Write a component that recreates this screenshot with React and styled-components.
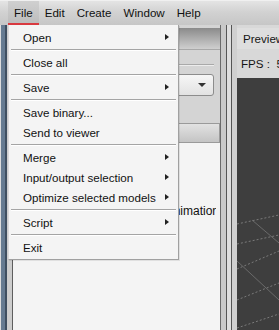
import React from 'react';
import styled, { createGlobalStyle } from 'styled-components';

const GlobalStyle = createGlobalStyle`
  html, body {
    margin: 0;
    padding: 0;
    background: #d4d4d4;
  }
  body {
    font-family: "Liberation Sans", Arial, sans-serif;
    font-size: 11.6px;
    color: #000;
  }
`;

const Window = styled.div`
  position: relative;
  width: 279px;
  height: 330px;
  overflow: hidden;
  display: flex;
  flex-direction: column;
  background: #d4d4d4;
`;

const MenuBar = styled.div`
  display: flex;
  height: 25px;
  padding-left: 8px;
  background: linear-gradient(#e4e4e4, #d2d2d2 45%, #c6c6c6);
  border-top: 1px solid #f0f0f0;
  box-sizing: border-box;
`;

const MenuTitle = styled.div`
  height: 100%;
  padding: 1px 6px 0;
  display: flex;
  align-items: center;
  box-sizing: border-box;
  color: #111;
  background: ${({ $open }) => ($open ? 'linear-gradient(#d0d0d0, #bdbdbd)' : 'transparent')};
  border-bottom: 2px solid ${({ $open }) => ($open ? '#d9393f' : 'transparent')};
`;

const Body = styled.div`
  flex: 1;
  display: flex;
  min-height: 0;
`;

const SideStrip = styled.div`
  width: 13px;
  flex: none;
  background: linear-gradient(
    90deg,
    #dcdcdc 0 1px,
    #667b91 1px 5px,
    #3f4f60 5px 7px,
    #cdcdcd 7px 12px,
    #5e5e5e 12px 13px
  );
`;

const LeftPanel = styled.div`
  width: 208px;
  flex: none;
  display: flex;
  flex-direction: column;
  border-right: 1px solid #6a6a6a;
  box-sizing: border-box;
`;

const PanelHeader = styled.div`
  height: 21px;
  margin-top: 3px;
  background: linear-gradient(#8a8a8a, #b4b4b4 60%, #cfcfcf);
  border-bottom: 1px solid #a8a8a8;
`;

const PanelTop = styled.div`
  padding: 14px 6px 0 10px;
  display: flex;
  flex-direction: column;
`;

const Rule = styled.div`
  height: 1px;
  background: #a9a9a9;
  border-bottom: 1px solid #ececec;
`;

const Combo = styled.div`
  position: relative;
  margin-top: 8px;
  height: 22px;
  box-sizing: border-box;
  border: 1px solid #8c8c8c;
  border-radius: 3px;
  background: linear-gradient(#f6f6f6, #e2e2e2);
`;

const ComboArrow = styled.span`
  position: absolute;
  right: 7px;
  top: 8px;
  width: 0;
  height: 0;
  border-left: 4px solid transparent;
  border-right: 4px solid transparent;
  border-top: 4px solid #333;
`;

const SectionButton = styled.div`
  margin-top: 27px;
  height: 20px;
  box-sizing: border-box;
  border: 1px solid #9a9a9a;
  border-left: none;
  background: linear-gradient(#e2e2e2, #c4c4c4);
`;

const SectionBody = styled.div`
  flex: 1;
  background: #f4f4f4;
  padding: 61px 4px 0 0;
  overflow: hidden;
`;

const Label = styled.div`
  white-space: nowrap;
  overflow: hidden;
  padding-left: 116px;
  font-size: 12px;
  color: #111;
`;

const Splitter = styled.div`
  width: 16px;
  flex: none;
  background: linear-gradient(
    90deg,
    #c9c9c9 0 5px,
    #555 5px 6px,
    #dedede 6px 10px,
    #555 10px 11px,
    #d0d0d0 11px 16px
  );
`;

const RightPanel = styled.div`
  flex: 1;
  display: flex;
  flex-direction: column;
  background: #d8d8d8;
  min-width: 0;
`;

const Tab = styled.div`
  height: 21px;
  margin-top: 3px;
  padding-left: 6px;
  display: flex;
  align-items: center;
  white-space: nowrap;
  color: #151515;
  background: #dedede;
`;

const Fps = styled.div`
  height: 29px;
  padding-left: 4px;
  display: flex;
  align-items: center;
  white-space: nowrap;
  color: #151515;
`;

const Viewport = styled.div`
  flex: 1;
  background: #3e3e3e;
  overflow: hidden;
`;

const Menu = styled.div`
  position: absolute;
  left: 8px;
  top: 25px;
  width: 171px;
  padding: 2px 0;
  box-sizing: border-box;
  background: #f4f4f4;
  border: 1px solid #a0a0a0;
  border-top: none;
  border-left-color: #d8d8d8;
  box-shadow: 1px 1px 0 rgba(0, 0, 0, 0.08);
`;

const Item = styled.div`
  position: relative;
  height: 20px;
  display: flex;
  align-items: center;
  padding-left: 14px;
  white-space: nowrap;
  color: #111;
`;

const SubArrow = styled.span`
  position: absolute;
  right: 9px;
  top: 7px;
  width: 0;
  height: 0;
  border-top: 3px solid transparent;
  border-bottom: 3px solid transparent;
  border-left: 4px solid #222;
`;

const Separator = styled.div`
  height: 1px;
  margin: 2px 2px 1px;
  background: #a4a4a4;
  border-bottom: 1px solid #fff;
`;

const menuEntries = [
  { label: 'Open', sub: true },
  '-',
  { label: 'Close all' },
  '-',
  { label: 'Save', sub: true },
  '-',
  { label: 'Save binary...' },
  { label: 'Send to viewer' },
  '-',
  { label: 'Merge', sub: true },
  { label: 'Input/output selection', sub: true },
  { label: 'Optimize selected models', sub: true },
  '-',
  { label: 'Script', sub: true },
  '-',
  { label: 'Exit' },
];

const Grid = () => (
  <svg width="42" height="252" viewBox="0 0 42 252">
    <g stroke="#7a7a7a" strokeWidth="1" strokeDasharray="2 2" fill="none">
      <line x1="0" y1="146" x2="42" y2="137" />
      <line x1="0" y1="166" x2="42" y2="157" />
      <line x1="0" y1="191" x2="42" y2="173" />
      <line x1="0" y1="222" x2="42" y2="205" />
      <line x1="0" y1="250" x2="42" y2="236" />
    </g>
    <g stroke="#6a6a6a" strokeWidth="1" fill="none">
      <line x1="15" y1="142" x2="42" y2="165" />
      <line x1="0" y1="183" x2="42" y2="222" />
    </g>
  </svg>
);

const App = () => (
  <>
    <GlobalStyle />
    <Window>
      <MenuBar>
        <MenuTitle $open>File</MenuTitle>
        <MenuTitle>Edit</MenuTitle>
        <MenuTitle>Create</MenuTitle>
        <MenuTitle>Window</MenuTitle>
        <MenuTitle>Help</MenuTitle>
      </MenuBar>
      <Body>
        <SideStrip />
        <LeftPanel>
          <PanelHeader />
          <PanelTop>
            <Rule />
            <Combo>
              <ComboArrow />
            </Combo>
          </PanelTop>
          <SectionButton />
          <SectionBody>
            <Label>Export animation</Label>
          </SectionBody>
        </LeftPanel>
        <Splitter />
        <RightPanel>
          <Tab>Preview</Tab>
          <Fps>FPS :&nbsp;&nbsp;5</Fps>
          <Viewport>
            <Grid />
          </Viewport>
        </RightPanel>
      </Body>
      <Menu>
        {menuEntries.map((entry, i) =>
          entry === '-' ? (
            <Separator key={i} />
          ) : (
            <Item key={i}>
              {entry.label}
              {entry.sub && <SubArrow />}
            </Item>
          )
        )}
      </Menu>
    </Window>
  </>
);

export default App;
